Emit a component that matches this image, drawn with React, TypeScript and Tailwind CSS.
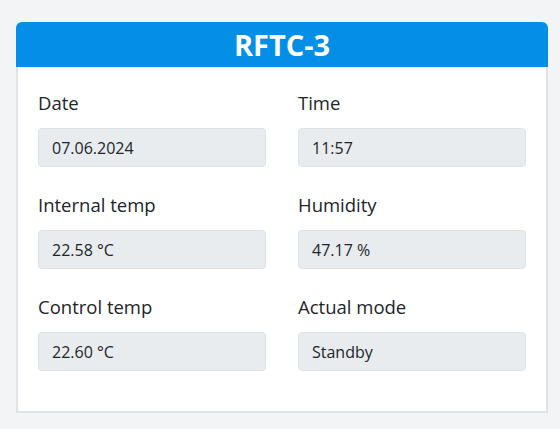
const fields = [
  { label: "Date", value: "07.06.2024" },
  { label: "Time", value: "11:57" },
  { label: "Internal temp", value: "22.58 °C" },
  { label: "Humidity", value: "47.17 %" },
  { label: "Control temp", value: "22.60 °C" },
  { label: "Actual mode", value: "Standby" },
];

export default function App() {
  return (
    <div
      className="min-h-[429px] bg-[#f3f4f6] pl-4 pt-[22px] pr-3"
      style={{ fontFamily: '"Open Sans", "Noto Sans", sans-serif' }}
    >
      <div className="w-[532px] rounded-t-md border-2 border-t-0 border-[#dfe2e8] bg-white">
        <div className="-mx-[2px] flex h-[45px] items-center justify-center rounded-t-md bg-[#038fe6]">
          <h1 className="text-[29px] font-bold leading-none text-white">RFTC-3</h1>
        </div>
        <div className="grid grid-cols-2 gap-x-8 gap-y-[26px] px-5 pt-6 pb-10">
          {fields.map((f) => (
            <div key={f.label}>
              <div className="mb-[13px] h-6 text-[18.5px] leading-6 text-[#212529]">
                {f.label}
              </div>
              <div className="flex h-[39px] items-center rounded border border-[#dee2e6] bg-[#e9ecef] px-[13px] text-[16px] text-[#212529]">
                {f.value}
              </div>
            </div>
          ))}
        </div>
      </div>
    </div>
  );
}
